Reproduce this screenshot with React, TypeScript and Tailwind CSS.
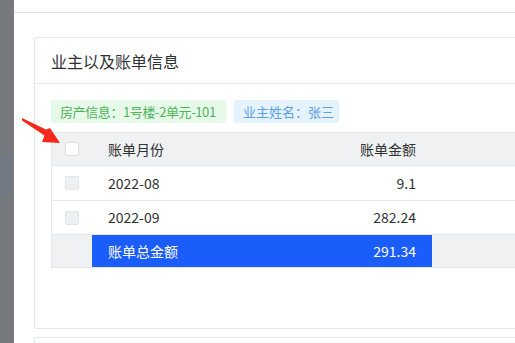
import React from 'react';

const rows = [
    { month: '2022-08', amount: '9.1' },
    { month: '2022-09', amount: '282.24' },
];

function Checkbox({ disabled }: { disabled?: boolean }) {
    return (
        <span
            className={`block w-[14px] h-[14px] rounded-[2px] border ${disabled ? 'bg-[#edf0f3] border-[#e1e4e8]' : 'bg-white border-[#dcdfe6]'}`}
        />
    );
}

export default function App() {
    return (
        <div className="relative w-[515px] h-[343px] overflow-hidden flex bg-white font-['Noto_Sans_CJK_SC',sans-serif] text-[#303133]">
            {/* Sidebar edge */}
            <div className="w-[14px] shrink-0 flex flex-col bg-[#76797e]">
                <div className="h-[155px]" />
                <div className="h-[40px] bg-[#737883]" />
            </div>

            <div className="flex-1 flex flex-col min-w-0">
                <div className="h-[13px] shrink-0 border-b border-[#e4e4e4]" />

                <div className="pl-[20px] pt-[24px]">
                    {/* Card */}
                    <div className="w-[600px] border border-[#e4e7ed] rounded-[2px] bg-white">
                        <div className="h-[46px] flex items-center px-[16px] border-b border-[#e4e7ed]">
                            <span className="text-[16px] leading-none text-[#303133]">业主以及账单信息</span>
                        </div>

                        <div className="pt-[16px] pl-[16px] pb-[60px]">
                            <div className="flex gap-[8px]">
                                <div className="h-[23px] w-[175px] flex items-center px-[9px] rounded-[3px] bg-[#e7f9e9] text-[#4db558] text-[13px] tracking-[-0.4px] whitespace-nowrap">
                                    房产信息：1号楼-2单元-101
                                </div>
                                <div className="h-[23px] w-[105px] flex items-center px-[9px] rounded-[3px] bg-[#e5f3fe] text-[#5c9fe4] text-[13px] whitespace-nowrap">
                                    业主姓名：张三
                                </div>
                            </div>

                            {/* Bill table */}
                            <div className="mt-[9px] border border-[#e4e7ed] text-[14px] text-[#303133]">
                                <div className="h-[33px] grid grid-cols-[40px_170px_170px_1fr] bg-[#f0f1f3] border-b border-[#e4e7ed]">
                                    <div className="flex items-center justify-center"><Checkbox /></div>
                                    <div className="flex items-center px-[16px]">账单月份</div>
                                    <div className="flex items-center justify-end px-[16px]">账单金额</div>
                                    <div />
                                </div>

                                {rows.map((row, i) => (
                                    <div
                                        key={row.month}
                                        className={`${i === 0 ? 'h-[35px]' : 'h-[34px]'} grid grid-cols-[40px_170px_170px_1fr] border-b border-[#e4e7ed]`}
                                    >
                                        <div className="flex items-center justify-center"><Checkbox disabled /></div>
                                        <div className="flex items-center px-[16px]">{row.month}</div>
                                        <div className="flex items-center justify-end px-[16px]">{row.amount}</div>
                                        <div />
                                    </div>
                                ))}

                                <div className="h-[32px] grid grid-cols-[40px_340px_1fr] bg-[#f0f1f3]">
                                    <div />
                                    <div className="flex items-center justify-between px-[16px] bg-[#1a5dfb] text-white">
                                        <span>账单总金额</span>
                                        <span>291.34</span>
                                    </div>
                                    <div />
                                </div>
                            </div>
                        </div>
                    </div>

                    <div className="mt-[8px] w-[600px] h-[40px] border border-[#e4e7ed] rounded-[2px]" />
                </div>
            </div>

            {/* Annotation arrow */}
            <svg className="absolute left-0 top-0 pointer-events-none" width="80" height="160" viewBox="0 0 80 160">
                <polygon points="22,118 46,129.5 50,128 60,143 42,142 44.5,135.5 22,120.5" fill="#f5281c" />
            </svg>
        </div>
    );
}
